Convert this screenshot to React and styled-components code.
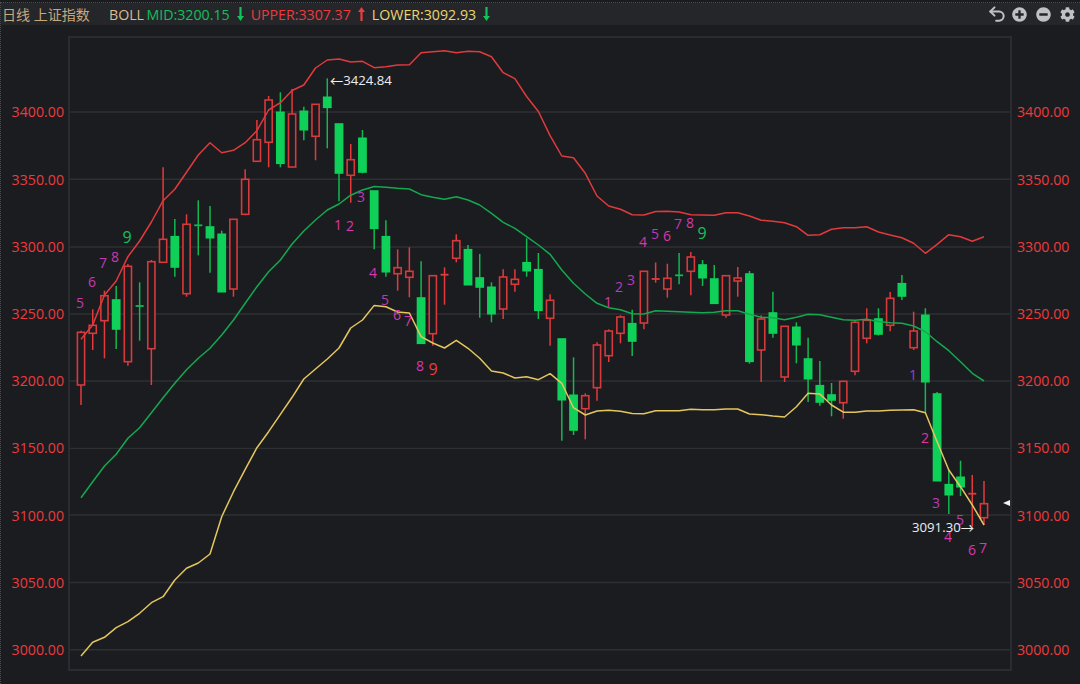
import React from "react";
import styled, { createGlobalStyle } from "styled-components";
import { Undo2 } from "lucide-react";
import { FaPlusCircle, FaMinusCircle, FaCog } from "react-icons/fa";

const GlobalStyle = createGlobalStyle`
  html, body {
    margin: 0;
    padding: 0;
    background: #1b1c20;
  }
  body {
    width: 1080px;
    height: 684px;
    overflow: hidden;
    font-family: "Open Sans", "Noto Sans CJK SC", sans-serif;
  }
`;

const Page = styled.div`
  box-sizing: border-box;
  width: 1080px;
  height: 682px;
  margin-top: 2px;
  border-top: 1px dotted #4c4d52;
  border-left: 1px dotted #4c4d52;
  background: #1b1c20;
`;

const Toolbar = styled.div`
  display: flex;
  align-items: center;
  justify-content: space-between;
  height: 22px;
  background: #24262a;
`;

const Legend = styled.div`
  display: flex;
  align-items: center;
  font-size: 14.2px;
  white-space: nowrap;
`;

const Title = styled.span`
  margin-left: 1px;
  width: 107px;
  color: #c9a87e;
  font-size: 14px;
`;

const IndicatorName = styled.span`
  width: 37.5px;
  color: #dfbb8e;
`;

const Reading = styled.span`
  color: ${(p) => p.$color};
`;

const TrendMark = styled.svg`
  display: block;
  margin: 0 7px;
  flex: none;
`;

const Tools = styled.div`
  display: flex;
  align-items: center;
  gap: 9px;
  padding-right: 5px;
  color: #bfc1c2;
`;

const UndoIcon = styled(Undo2)`
  margin-right: -4px;
`;

const ChartRow = styled.div`
  display: grid;
  grid-template-columns: 67px 944px 68px;
  margin-top: 11px;
`;

const Axis = styled.div`
  display: flex;
  flex-direction: column;
  padding-top: 42.4px;
  align-items: ${(p) => (p.$side === "left" ? "flex-end" : "flex-start")};
  padding-${(p) => (p.$side === "left" ? "right" : "left")}: ${(p) => (p.$side === "left" ? "4px" : "5px")};
`;

const AxisLabel = styled.div`
  height: 67.2px;
  line-height: 67.2px;
  font-size: 14.2px;
  color: #ee3a3c;
`;

const Plot = styled.div`
  box-sizing: border-box;
  width: 944px;
  height: 635px;
  border: 2px solid #2b2c31;
`;

const PlotSvg = styled.svg`
  display: block;
`;

const GridLine = styled.line`
  stroke: #2e2f33;
  stroke-width: 1.4;
`;

const Wick = styled.line`
  stroke: ${(p) => (p.$up ? "#e43a3c" : "#12b850")};
  stroke-width: ${(p) => (p.$thick ? 1.8 : 1.5)};
`;

const Body = styled.rect`
  fill: ${(p) => (p.$up ? "#1b1c20" : "#0fd058")};
  stroke: ${(p) => (p.$up ? "#d8393b" : "#0fd058")};
  stroke-width: 1.6;
`;

const Band = styled.polyline`
  fill: none;
  stroke: ${(p) => p.$color};
  stroke-width: 1.5;
  stroke-linejoin: round;
`;

const SeqNumber = styled.text`
  font-family: "Open Sans", sans-serif;
  font-size: ${(p) => (p.$big ? "16px" : "14px")};
  fill: ${(p) => p.$color};
  text-anchor: middle;
  dominant-baseline: central;
`;

const PriceTag = styled.text`
  font-family: "Open Sans", sans-serif;
  font-size: 13.2px;
  fill: #eceef0;
  dominant-baseline: central;
`;

const TagArrow = styled.tspan`
  font-family: "Noto Sans CJK SC", sans-serif;
`;

const LastMark = styled.polygon`
  fill: #f2f2f2;
`;

// each candle: top, bottom, high, low, "r" or "g"
const candles = [
  [332.3, 385, 330.7, 405, "r"], [325.3, 333.3, 309.3, 350, "r"], [295.7, 320.7, 290.7, 358.3, "r"],
  [300, 329, 286, 349, "g"], [266.3, 361.7, 264, 365.7, "r"], [306, 306, 282.3, 340.7, "g"],
  [261.7, 348.7, 260, 385, "r"], [239.3, 262.3, 167.3, 262.3, "r"], [236.7, 267, 219, 276.7, "g"],
  [224.3, 293.7, 214.3, 296.7, "r"], [225.3, 225.3, 200.3, 255.3, "g"], [227, 237.7, 206, 272.7, "g"],
  [234.3, 291.7, 230.7, 291.7, "g"], [219.3, 289, 219.3, 296.7, "r"], [179.3, 214.3, 169.3, 215.3, "r"],
  [139.7, 161.3, 120, 161.3, "r"], [100, 142.3, 96, 167.3, "r"], [112.3, 163.3, 92.3, 167.3, "g"],
  [114, 167, 89, 167, "r"], [111.3, 129.7, 106.7, 140.3, "g"], [104.3, 136.3, 104.3, 160.3, "r"],
  [97.3, 107.3, 78.3, 148.3, "g"], [124, 173, 124, 201.3, "g"], [159.7, 175.3, 144, 202.7, "r"],
  [138.3, 172, 130, 173.3, "g"], [191, 228.3, 191, 249.3, "g"], [236.7, 271.7, 220.3, 276.7, "g"],
  [267.7, 273.7, 249.3, 290.7, "r"], [271.3, 277.3, 247.3, 297.3, "r"], [298, 343.3, 261.3, 343.3, "g"],
  [275.7, 333.7, 275.7, 345.7, "r"], [274.7, 274.7, 267.3, 304.7, "r"], [240.7, 258.3, 234.3, 262.3, "r"],
  [249.7, 284.7, 245, 284.7, "g"], [278, 287, 254, 317.7, "g"], [287.3, 313.7, 282.3, 322.3, "g"],
  [277, 309, 269.3, 319, "r"], [279.3, 284.3, 269.3, 291.7, "r"], [262.7, 270.7, 238.3, 276.7, "g"],
  [269.7, 310.3, 253, 319, "g"], [300.3, 318.3, 294.3, 345.7, "r"], [339, 399.7, 339, 440.7, "g"],
  [395.3, 430, 357.3, 435, "g"], [395.7, 408.7, 393.3, 439.3, "r"], [345, 387.7, 342.3, 400.7, "r"],
  [331, 355.7, 329.3, 362, "r"], [317, 333.3, 315.3, 343.3, "r"], [323.7, 341, 309.7, 356, "g"],
  [271.3, 323, 271.3, 329.3, "r"], [279, 279, 262.5, 282.7, "r"], [278.3, 289, 263.7, 297.7, "r"],
  [275.3, 275.3, 253, 284.3, "g"], [257, 271.3, 252, 295.3, "r"], [265, 277.7, 260, 286, "g"],
  [279, 303.3, 265, 303.3, "g"], [275.7, 315, 275.7, 317.7, "r"], [278, 281, 267, 296.7, "r"],
  [274, 361.3, 271, 363.7, "g"], [319, 350, 315.3, 382, "r"], [313, 333, 291.7, 337.7, "g"],
  [326.3, 377, 326.3, 382, "r"], [327.3, 344.7, 322.3, 363.3, "g"], [359, 378.7, 337.7, 402, "g"],
  [385.7, 402, 361, 405.7, "g"], [395, 400, 383, 416.3, "g"], [381.3, 402.7, 381.3, 418.7, "r"],
  [322.3, 371.3, 320.7, 375.3, "r"], [320.3, 338.3, 308.3, 343.3, "r"], [319, 334, 308.3, 335.5, "g"],
  [298.3, 325.3, 292, 331.3, "r"], [283.7, 296, 275, 300, "g"], [331, 347.7, 311.7, 350, "r"],
  [315.3, 381.7, 308.3, 412.7, "g"], [394, 480.7, 392, 480.7, "g"], [484.7, 494.7, 470, 514, "g"],
  [477.3, 486.7, 460.7, 496, "g"], [493.7, 493.7, 475, 526.7, "r"], [503.7, 517.7, 481, 525, "r"],
];

const upper = [
  339.3, 325, 295, 281, 256.7, 241, 222, 200.7, 189.3, 172.3, 155, 142.7, 152.7, 150.3, 142.7, 130.7,
  110, 102.7, 90.5, 85, 68, 60, 59, 62, 61.3, 67.7, 66.7, 65, 64.7, 52.7, 51.7, 50.7, 52.7, 51.3, 51.7,
  56.7, 72.7, 78.7, 96.5, 111.5, 135.7, 156, 157.7, 173.3, 196, 206, 209.3, 214.7, 215, 211.5, 211.3,
  212, 214.7, 215, 215.3, 212.7, 212.7, 216, 220.3, 221.3, 222.7, 226.7, 235.3, 234.7, 229.3, 227.7,
  227.7, 226.7, 232, 235, 237.7, 243.3, 253.3, 244.3, 234.7, 236.7, 241.3, 236.7,
];

const mid = [
  497.7, 481.7, 466, 454.3, 438.3, 427.7, 412.7, 397.7, 383.3, 369.7, 358.3, 348.3, 335, 320, 303.3,
  286.7, 271.7, 260, 244, 231, 220, 210, 204, 195.2, 190, 186.5, 187.2, 188.3, 189, 194.7, 197.3, 199.3,
  196.7, 200, 205, 213.3, 222.3, 228.3, 236.7, 245, 254.3, 270, 283.3, 294, 303.3, 307.7, 309.7, 313.7,
  314, 310.7, 311.3, 311.7, 312.3, 312.7, 312.3, 310.7, 310.7, 314.3, 317.3, 317.7, 319.7, 317.3, 314.3,
  314.7, 317.3, 319.7, 320.2, 319.3, 321.5, 322.7, 323.3, 326, 331.7, 341.7, 350.7, 361.7, 373.3, 381,
];

const lower = [
  656, 642.3, 637.3, 627.7, 621.7, 613.3, 602.7, 596.7, 580, 568.3, 563, 554, 516.7, 491.7, 469.3, 447.7,
  431.7, 414.3, 397.3, 379, 369, 359, 348, 328, 320, 305.4, 306.8, 312, 313, 336.7, 343, 348, 340.3, 348.3,
  358.3, 371, 373, 378, 376.7, 379.7, 373.7, 383.3, 407.7, 415, 411, 410.3, 411.3, 413.5, 413.7, 410.7,
  410.7, 410.7, 409.3, 409.7, 409.7, 409, 409, 414, 414.7, 416, 417, 406.7, 393.3, 394, 405, 412.2, 412.3,
  411, 411, 410.3, 410, 409.7, 412.7, 441.7, 470, 486.7, 505, 525,
];

const PINK = "#d838aa";
const PURPLE = "#bc3ab6";
const GREEN9 = "#12c25a";

const seqNumbers = [
  ["5", 80, 302, PURPLE], ["6", 92, 281, "#c83aae"], ["7", 103, 262, PURPLE], ["8", 115, 256, "#c83aae"],
  ["9", 127, 237, GREEN9, true], ["1", 338, 224, PINK], ["2", 350, 225, PINK], ["3", 361, 196, PURPLE],
  ["4", 373, 272, PINK], ["5", 385, 299, PURPLE], ["6", 397, 314, PINK], ["7", 408, 320, PINK],
  ["8", 420, 365, PINK], ["9", 433, 369, "#ee3a3c", true], ["1", 608, 301, PINK], ["2", 619, 286, PURPLE],
  ["3", 631, 279, PURPLE], ["4", 643, 241, PINK], ["5", 655, 233, PURPLE], ["6", 667, 235, PINK],
  ["7", 678, 223, PURPLE], ["8", 690, 222, PINK], ["9", 702, 233, GREEN9, true], ["1", 913, 374, "#a23cc4"],
  ["2", 925, 437, PINK], ["3", 936, 502, PURPLE], ["4", 948, 536, PINK], ["5", 960, 519, PURPLE],
  ["6", 972, 549, PINK], ["7", 983, 547, PINK],
];

const prices = ["3400.00", "3350.00", "3300.00", "3250.00", "3200.00", "3150.00", "3100.00", "3050.00", "3000.00"];
const gridY = [112, 179.3, 247, 314, 381, 448.4, 515, 582.5, 649.7];

const xAt = (i) => 81 + (i * 903) / 77;
const toPoints = (ys) => ys.map((y, i) => `${xAt(i).toFixed(1)},${y}`).join(" ");

const Trend = ({ dir }) => (
  <TrendMark width="7" height="14" viewBox="0 0 7 14">
    {dir === "up" ? (
      <path d="M3.5 0 7 5H4.6V14H2.4V5H0Z" fill="#ef3b3c" />
    ) : (
      <path d="M3.5 14 0 9H2.4V0H4.6V9H7Z" fill="#12c25a" />
    )}
  </TrendMark>
);

const Candle = ({ data, x }) => {
  const [top, bottom, high, low, kind] = data;
  const up = kind === "r";
  const doji = top === bottom;
  return (
    <>
      <Wick $up={up} x1={x} x2={x} y1={high} y2={low} />
      {doji ? (
        <Wick $up={up} $thick x1={x - 4} x2={x + 4} y1={top} y2={top} />
      ) : (
        <Body $up={up} x={x - 3.6} y={top} width={7.2} height={bottom - top} />
      )}
    </>
  );
};

const PriceAxis = ({ side }) => (
  <Axis $side={side}>
    {prices.map((p) => (
      <AxisLabel key={p}>{p}</AxisLabel>
    ))}
  </Axis>
);

export default function App() {
  return (
    <>
      <GlobalStyle />
      <Page>
        <Toolbar>
          <Legend>
            <Title>日线 上证指数</Title>
            <IndicatorName>BOLL</IndicatorName>
            <Reading $color="#10c05a">MID:3200.15</Reading>
            <Trend dir="down" />
            <Reading $color="#ee3a3c">UPPER:3307.37</Reading>
            <Trend dir="up" />
            <Reading $color="#eed46f">LOWER:3092.93</Reading>
            <Trend dir="down" />
          </Legend>
          <Tools>
            <UndoIcon size={20} strokeWidth={2.4} />
            <FaPlusCircle size={15} />
            <FaMinusCircle size={15} />
            <FaCog size={15} />
          </Tools>
        </Toolbar>
        <ChartRow>
          <PriceAxis side="left" />
          <Plot>
            <PlotSvg width="940" height="631" viewBox="70 38 940 631">
              {gridY.map((y) => (
                <GridLine key={y} x1="70" x2="1010" y1={y} y2={y} />
              ))}
              {candles.map((c, i) => (
                <Candle key={i} data={c} x={xAt(i)} />
              ))}
              <Band $color="#e03a3c" points={toPoints(upper)} />
              <Band $color="#14a84f" points={toPoints(mid)} />
              <Band $color="#e4c65e" points={toPoints(lower)} />
              {seqNumbers.map(([n, x, y, color, big], i) => (
                <SeqNumber key={i} x={x} y={y} $color={color} $big={big}>
                  {n}
                </SeqNumber>
              ))}
              <PriceTag x="330" y="80"><TagArrow>←</TagArrow>3424.84</PriceTag>
              <PriceTag x="912" y="527">3091.30<TagArrow>→</TagArrow></PriceTag>
              <LastMark points="1003,503 1011,499.5 1011,506.5" />
            </PlotSvg>
          </Plot>
          <PriceAxis side="right" />
        </ChartRow>
      </Page>
    </>
  );
}
